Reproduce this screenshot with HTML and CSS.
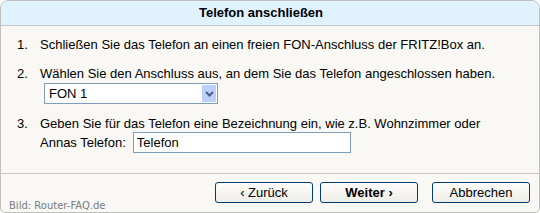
FILE: index.html
```html
<!DOCTYPE html>
<html lang="de">
<head>
<meta charset="utf-8">
<title>Telefon anschließen</title>
<link rel="stylesheet" href="styles.css">
</head>
<body>
<div class="dialog">
  <div class="header">Telefon anschließen</div>
  <div class="content">
    <div class="step">
      <span class="num">1.</span>
      <span class="text">Schließen Sie das Telefon an einen freien FON-Anschluss der FRITZ!Box an.</span>
    </div>
    <div class="step step2">
      <span class="num">2.</span>
      <span class="text">Wählen Sie den Anschluss aus, an dem Sie das Telefon angeschlossen haben.</span>
    </div>
    <div class="select">
      <span class="select-value">FON 1</span>
      <span class="select-btn">
        <svg width="9" height="6" viewBox="0 0 9 6"><path d="M1 1 L4.5 4.5 L8 1" fill="none" stroke="#4d6185" stroke-width="2"/></svg>
      </span>
    </div>
    <div class="step step3">
      <span class="num">3.</span>
      <span class="text">Geben Sie für das Telefon eine Bezeichnung ein, wie z.B. Wohnzimmer oder</span>
    </div>
    <div class="name-row">
      <span class="text">Annas Telefon:</span>
      <input class="input" type="text" value="Telefon">
    </div>
  </div>
  <div class="footer">
    <span class="credit">Bild: Router-FAQ.de</span>
    <div class="buttons">
      <button class="btn">‹ Zurück</button>
      <button class="btn btn-primary">Weiter ›</button>
      <button class="btn btn-cancel">Abbrechen</button>
    </div>
  </div>
</div>
</body>
</html>
```
FILE: styles.css
```css
html, body {
  margin: 0;
  padding: 0;
  background: #ffffff;
}
body {
  font-family: "Liberation Sans", Arial, sans-serif;
  font-size: 13px;
  color: #000;
}
.dialog {
  width: 540px;
  height: 213px;
  box-sizing: border-box;
  border: 1px solid #bfbfbb;
  border-radius: 8px 8px 5px 5px;
  background: #f9f8f4;
  display: flex;
  flex-direction: column;
  overflow: hidden;
}
.header {
  height: 24px;
  line-height: 24px;
  background: #dff2fd;
  border-bottom: 1px solid #bfc7cc;
  text-align: center;
  font-weight: bold;
  font-size: 13px;
  padding-right: 18px;
}
.content {
  height: 148px;
  border-bottom: 1px solid #c8c8c4;
  padding-top: 11px;
  box-sizing: border-box;
}
.step {
  display: flex;
  line-height: 16px;
}
.num {
  width: 23px;
  padding-left: 16px;
}
.step2 {
  margin-top: 13px;
}
.select {
  margin: 1px 0 0 43px;
  width: 174px;
  height: 21px;
  box-sizing: border-box;
  border: 1px solid #7f9db9;
  background: #fff;
  display: flex;
  align-items: center;
  justify-content: space-between;
}
.select-value {
  padding-left: 4px;
}
.select-btn {
  width: 14px;
  height: 17px;
  margin-right: 1px;
  background: #bbd0fb;
  display: flex;
  align-items: center;
  justify-content: center;
}
.step3 {
  margin-top: 12px;
}
.name-row {
  display: flex;
  align-items: center;
  margin-left: 39px;
  height: 21px;
}
.input {
  margin: 0 0 0 7px;
  width: 218px;
  height: 21px;
  box-sizing: border-box;
  border: 1px solid #7f9db9;
  padding: 0 3px;
  font-family: "Liberation Sans", Arial, sans-serif;
  font-size: 13px;
  color: #000;
  background: #fff;
  outline: none;
}
.footer {
  flex: 1;
  display: flex;
  justify-content: space-between;
  padding: 8px 9px 0 8px;
}
.credit {
  font-family: "DejaVu Sans", Verdana, sans-serif;
  font-size: 10px;
  color: #777c82;
  align-self: flex-end;
  margin-bottom: 1px;
}
.buttons {
  display: flex;
  align-items: flex-start;
}
.btn {
  width: 98px;
  height: 21px;
  box-sizing: border-box;
  border: 1px solid #003c74;
  border-radius: 3px;
  background: linear-gradient(#fdfdfb, #eeede7);
  font-family: "Liberation Sans", Arial, sans-serif;
  font-size: 13px;
  color: #000;
  padding: 0;
  margin-left: 7px;
}
.btn-primary {
  font-weight: bold;
}
.btn-cancel {
  margin-left: 14px;
}
```
